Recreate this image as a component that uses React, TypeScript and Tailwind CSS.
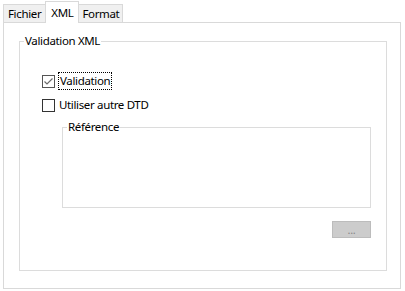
const font = { fontFamily: '"Noto Sans", "Open Sans", sans-serif' };

function Box({ checked }: { checked?: boolean }) {
  return (
    <span
      className={`w-[13px] h-[13px] border flex items-center justify-center bg-white shrink-0 ${
        checked ? 'border-[#555555]' : 'border-[#333333]'
      }`}
    >
      {checked && (
        <svg width="11" height="11" viewBox="0 0 11 11">
          <path d="M1.5 5.5 L4 8 L9.5 2.5" fill="none" stroke="#6b6b6b" strokeWidth="1.2" />
        </svg>
      )}
    </span>
  );
}

export default function App() {
  return (
    <div
      className="w-[405px] h-[291px] bg-white pl-[3px] pt-[1px] pr-[4px] pb-[2px] flex flex-col text-[11.5px] leading-[16px] tracking-[-0.35px] text-black"
      style={font}
    >
      <div className="flex items-end h-[21px] relative z-10">
        <div className="h-[18px] px-[4px] border border-r-0 border-b-0 border-[#d9d9d9] bg-[#f0f0f0] flex items-center">
          Fichier
        </div>
        <div className="h-[22px] -mb-px px-[5px] border border-b-0 border-[#d9d9d9] bg-white flex items-center">
          XML
        </div>
        <div className="h-[18px] px-[3px] border border-l-0 border-b-0 border-[#d9d9d9] bg-[#f0f0f0] flex items-center">
          Format
        </div>
      </div>
      <div className="flex-1 border border-[#d9d9d9] bg-white pl-[15px] pr-[13px] pt-[10px] pb-[17px] flex flex-col">
        <fieldset className="flex-1 border border-[#dcdcdc] flex flex-col">
          <legend className="px-[1px] ml-[4px]">Validation XML</legend>
          <div className="flex-1 pl-[22px] pr-[15px] flex flex-col">
            <label className="flex items-center gap-[3px] mt-[23px]">
              <Box checked />
              <span className="border border-dotted border-black px-[1px] leading-[16px]">Validation</span>
            </label>
            <label className="flex items-center gap-[4px] mt-[7px]">
              <Box />
              <span>Utiliser autre DTD</span>
            </label>
            <fieldset className="border border-[#dcdcdc] ml-[20px] mt-[6px] h-[89px]">
              <legend className="ml-[4px] px-[1px]">Référence</legend>
            </fieldset>
            <div className="flex justify-end mt-[13px]">
              <button className="w-[39px] h-[17px] bg-[#cccccc] border border-[#bcbcbc] text-[#888888] text-[11px] leading-[10px] flex items-center justify-center">
                ...
              </button>
            </div>
          </div>
        </fieldset>
      </div>
    </div>
  );
}
